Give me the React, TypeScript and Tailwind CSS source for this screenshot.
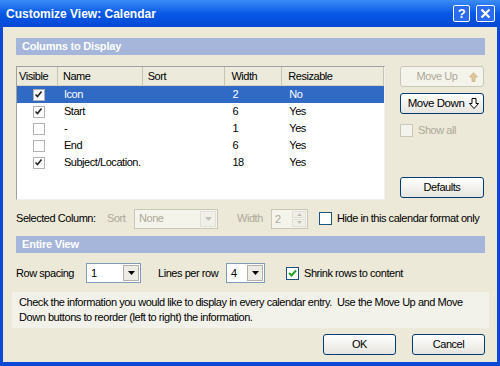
import React from 'react';

const ROWS = [
  { on: true, name: 'Icon', width: '2', res: 'No', sel: true },
  { on: true, name: 'Start', width: '6', res: 'Yes', sel: false },
  { on: false, name: '-', width: '1', res: 'Yes', sel: false },
  { on: false, name: 'End', width: '6', res: 'Yes', sel: false },
  { on: true, name: 'Subject/Location.', width: '18', res: 'Yes', sel: false },
];

function Check({ on, disabled = false }: { on: boolean; disabled?: boolean }) {
  return (
    <span
      className={`w-[13px] h-[13px] flex items-center justify-center border ${
        disabled ? 'border-[#c9c7ba] bg-[#f4f3ee]' : 'border-[#1c5180] bg-white'
      }`}
    >
      {on && (
        <svg width="9" height="9" viewBox="0 0 9 9">
          <path d="M1 4 L3.5 6.5 L8 1.5" stroke={disabled ? '#aca899' : '#21a121'} strokeWidth="2" fill="none" />
        </svg>
      )}
    </span>
  );
}

function ListCheck({ on }: { on: boolean }) {
  return (
    <span className="w-[12px] h-[12px] flex items-center justify-center border border-[#b2b2b2] bg-white">
      {on && (
        <svg width="9" height="9" viewBox="0 0 9 9">
          <path d="M1.5 4.5 L3.5 6.5 L7.5 1.5" stroke="#222" strokeWidth="1.6" fill="none" />
        </svg>
      )}
    </span>
  );
}

function DropArrow({ disabled = false }: { disabled?: boolean }) {
  return (
    <span
      className={`w-[16px] h-full flex items-center justify-center border ${
        disabled ? 'border-[#e2e0d6] bg-[#f0efe8]' : 'border-[#b4b2a8] bg-[#ecebe6]'
      }`}
    >
      <svg width="7" height="4" viewBox="0 0 7 4">
        <path d="M0 0 H7 L3.5 4 Z" fill={disabled ? '#c4c2b8' : '#000'} />
      </svg>
    </span>
  );
}

function Combo({ value, w, disabled = false }: { value: string; w: string; disabled?: boolean }) {
  return (
    <div
      className={`${w} h-[20px] flex items-center border ${
        disabled ? 'border-[#c9c7ba] bg-[#f5f4ea]' : 'border-[#7f9db9] bg-white'
      } p-[1px]`}
    >
      <span className={`flex-1 pl-[3px] ${disabled ? 'text-[#aca899]' : 'text-black'}`}>{value}</span>
      <DropArrow disabled={disabled} />
    </div>
  );
}

function XpButton({ children, disabled = false, w = 'w-[84px]' }: { children: React.ReactNode; disabled?: boolean; w?: string }) {
  return (
    <button
      className={`${w} h-[21px] rounded-[3px] border flex items-center justify-center ${
        disabled
          ? 'border-[#c9c7ba] bg-[#f5f4ea] text-[#aca899]'
          : 'border-[#003c74] bg-gradient-to-b from-white to-[#e6e5de] text-black'
      }`}
    >
      {children}
    </button>
  );
}

function Band({ label }: { label: string }) {
  return (
    <div className="h-[17px] bg-[#a5b6da] flex items-center pl-[6px] text-white font-bold text-[11px] tracking-[-0.2px]">
      {label}
    </div>
  );
}

export default function App() {
  return (
    <div className="w-[500px] h-[366px] flex flex-col bg-[#0a49d6] font-['Liberation_Sans',Arial,sans-serif] text-[11px] tracking-[-0.45px] whitespace-nowrap text-black overflow-hidden">
      {/* Title bar */}
      <div className="h-[27px] flex items-center justify-between bg-gradient-to-b from-[#3b8cf8] via-[#0758e6] to-[#0449d4] pl-[6px] pr-[5px]">
        <span className="text-white font-bold text-[12px] tracking-[0px]">Customize View: Calendar</span>
        <div className="flex gap-[6px]">
          <span className="w-[17px] h-[17px] rounded-[2px] border border-white bg-[#2a6bf0] text-white font-bold text-[13px] flex items-center justify-center">?</span>
          <span className="w-[19px] h-[17px] rounded-[2px] border border-white bg-[#2a6bf0] flex items-center justify-center">
            <svg width="11" height="11" viewBox="0 0 11 11">
              <path d="M1.5 1.5 L9.5 9.5 M9.5 1.5 L1.5 9.5" stroke="#fff" strokeWidth="2.2" />
            </svg>
          </span>
        </div>
      </div>

      {/* Body */}
      <div className="flex-1 mx-[3px] mb-[4px] bg-[#ece9d8] flex flex-col pl-[13px] pr-[12px] pt-[11px]">
        <Band label="Columns to Display" />

        <div className="mt-[11px] flex">
          {/* List */}
          <div className="w-[369px] h-[134px] bg-white border border-t-[#a0a0a0] border-l-[#a0a0a0] border-b-[#f0f0f0] border-r-[#f0f0f0] flex flex-col">
            <div className="h-[19px] flex bg-[#ebeadb] border-b border-[#d6d2c2] text-black">
              <div className="w-[41px] pl-[2px] flex items-center border-r border-[#c7c5b2]">Visible</div>
              <div className="w-[85px] pl-[5px] flex items-center border-r border-[#c7c5b2]">Name</div>
              <div className="w-[83px] pl-[5px] flex items-center border-r border-[#c7c5b2]">Sort</div>
              <div className="w-[57px] pl-[6px] flex items-center border-r border-[#c7c5b2]">Width</div>
              <div className="w-[102px] pl-[6px] flex items-center border-r border-[#c7c5b2]">Resizable</div>
            </div>
            {ROWS.map((r) => (
              <div
                key={r.name}
                className={`h-[17px] flex items-center ${r.sel ? 'bg-[#316ac5] text-white' : 'text-black'}`}
              >
                <div className="w-[41px] flex justify-center pl-[3px]">
                  <ListCheck on={r.on} />
                </div>
                <div className="w-[85px] pl-[6px]">{r.name}</div>
                <div className="w-[83px]" />
                <div className="w-[57px] pl-[7px]">{r.width}</div>
                <div className="w-[102px] pl-[7px]">{r.res}</div>
              </div>
            ))}
          </div>

          {/* Right buttons */}
          <div className="ml-[15px] flex flex-col">
            <XpButton disabled>
              <span className="flex-1 text-center pl-[4px]">Move Up</span>
              <svg width="9" height="10" viewBox="0 0 9 10" className="mr-[5px]">
                <path d="M4.5 0.5 L8.5 5 H6 V9.5 H3 V5 H0.5 Z" fill="#e2c79a" stroke="#c9b28a" strokeWidth="0.8" />
              </svg>
            </XpButton>
            <div className="mt-[6px]">
              <XpButton>
                <span className="flex-1 text-center pl-[2px] text-[11.5px]">Move Down</span>
                <svg width="10" height="11" viewBox="0 0 10 11" className="mr-[4px]">
                  <path d="M3 0.5 H7 V5.5 H9.5 L5 10.5 L0.5 5.5 H3 Z" fill="#fff" stroke="#000" strokeWidth="1" />
                </svg>
              </XpButton>
            </div>
            <div className="mt-[8px] flex items-center gap-[5px] text-[#aca899]">
              <Check on={false} disabled />
              <span>Show all</span>
            </div>
            <div className="mt-[38px]">
              <XpButton>Defaults</XpButton>
            </div>
          </div>
        </div>

        {/* Selected column */}
        <div className="mt-[8px] h-[21px] flex items-center">
          <span className="w-[91px]">Selected Column:</span>
          <span className="w-[27px] text-[#aca899]">Sort</span>
          <Combo value="None" w="w-[84px]" disabled />
          <span className="ml-[19px] w-[34px] text-[#aca899]">Width</span>
          <div className="w-[37px] h-[20px] flex border border-[#c9c7ba] bg-[#f5f4ea] p-[1px]">
            <span className="flex-1 pl-[2px] text-[#aca899] leading-[16px]">2</span>
            <div className="w-[14px] flex flex-col gap-[1px]">
              <span className="flex-1 bg-[#f0efe8] border border-[#e2e0d6] flex items-center justify-center">
                <svg width="5" height="3" viewBox="0 0 5 3"><path d="M0 3 H5 L2.5 0 Z" fill="#c4c2b8" /></svg>
              </span>
              <span className="flex-1 bg-[#f0efe8] border border-[#e2e0d6] flex items-center justify-center">
                <svg width="5" height="3" viewBox="0 0 5 3"><path d="M0 0 H5 L2.5 3 Z" fill="#c4c2b8" /></svg>
              </span>
            </div>
          </div>
          <span className="ml-[11px]">
            <Check on={false} />
          </span>
          <span className="ml-[5px]">Hide in this calendar format only</span>
        </div>

        <div className="mt-[7px]">
          <Band label="Entire View" />
        </div>

        {/* Entire view row */}
        <div className="mt-[10px] h-[20px] flex items-center">
          <span className="w-[70px]">Row spacing</span>
          <Combo value="1" w="w-[55px]" />
          <span className="ml-[17px] w-[68px]">Lines per row</span>
          <Combo value="4" w="w-[39px]" />
          <span className="ml-[21px]">
            <Check on />
          </span>
          <span className="ml-[5px]">Shrink rows to content</span>
        </div>

        {/* Info */}
        <div className="mt-[9px] -ml-[4px] -mr-[4px] h-[36px] bg-[#f3f2ea] px-[7px] pt-[3px] leading-[15px]">
          Check the information you would like to display in every calendar entry.&nbsp; Use the Move Up and Move
          <br />
          Down buttons to reorder (left to right) the information.
        </div>

        {/* Footer */}
        <div className="mt-[6px] flex justify-end gap-[16px]">
          <XpButton w="w-[73px]">OK</XpButton>
          <XpButton w="w-[73px]">Cancel</XpButton>
        </div>
      </div>
    </div>
  );
}
